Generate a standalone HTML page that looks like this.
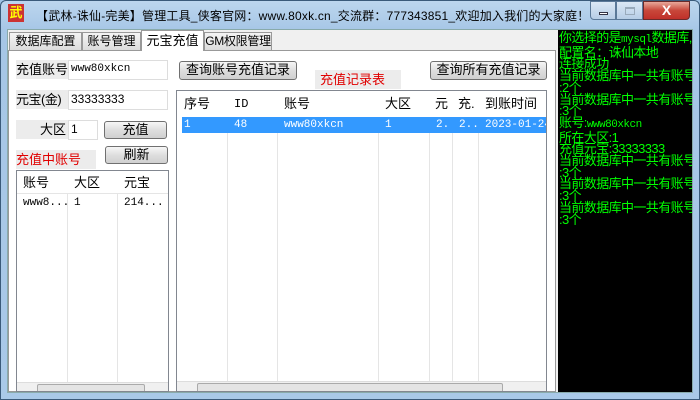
<!DOCTYPE html>
<html><head><meta charset="utf-8"><style>
*{box-sizing:border-box;margin:0;padding:0}
body{width:700px;height:400px;overflow:hidden;position:relative;background:#9fc3e6;font-family:"Liberation Sans","Noto Sans CJK SC","WenQuanYi Zen Hei",sans-serif;font-size:12px;color:#000}
.a{position:absolute}
.frame{left:0;top:0;width:700px;height:400px;background:linear-gradient(#bcd6ee,#a6c6e6 30px,#a9c9e8);border:1px solid #3a5a7a;border-radius:6px 6px 0 0}
.title{left:36px;top:7px;font-size:12px;color:#000;white-space:nowrap;letter-spacing:0.2px}
.client{left:7px;top:29px;width:686px;height:364px;background:#f0f0f0;border:1px solid #8aa}
.tab{top:32px;height:19px;background:linear-gradient(#f4f4f4,#dcdcdc);border:1px solid #999;font-size:12px;text-align:center;line-height:17px;white-space:nowrap;overflow:hidden}
.page{left:8px;top:50px;width:548px;height:342px;background:#fff;border:1px solid #999}
.lbl{background:#ececec;font-size:13px;line-height:19px;white-space:nowrap}
.inp{background:#fff;border:1px solid #ddd;font-family:"Liberation Mono","Noto Sans CJK SC",monospace;font-size:11px;line-height:17px;padding-left:2px}
.btn{background:linear-gradient(#f6f6f6,#dedede 50%,#d0d0d0);border:1px solid #707070;border-radius:3px;font-size:13px;text-align:center;line-height:16px;white-space:nowrap}
.red{color:#e00000;font-size:13px;line-height:19px}
.list{background:#fff;border:1px solid #828790;overflow:hidden}
.hd{position:absolute;top:0;height:100%;border-right:1px solid #e5e5e5}
.sb{background:#f0f0f0;border-top:1px solid #ddd}
.log{left:558px;top:30px;width:134px;height:362px;background:#000;color:#00ff00;font-size:13px;line-height:11.7px;padding:2px 0 0 1px;overflow:hidden;white-space:nowrap;letter-spacing:-0.6px}
.log span{font-family:"Liberation Mono",monospace;font-size:11px;letter-spacing:-0.5px}
</style></head><body>
<div class="a frame"></div>
<div class="a" style="left:8px;top:4px;width:16px;height:18px;background:#c33;color:#ff0;font-size:13px;font-weight:bold;line-height:18px;text-align:center">武</div>
<div class="a title">【武林-诛仙-完美】管理工具_侠客官网：www.80xk.cn_交流群：777343851_欢迎加入我们的大家庭！</div>
<div class="a" style="left:590px;top:1px;width:26px;height:19px;border:1px solid #5a7898;border-radius:0 0 0 4px;background:linear-gradient(#dbe8f5,#b6cde6)"><div class="a" style="left:8px;top:10px;width:9px;height:3px;background:#fff;border:1px solid #334"></div></div>
<div class="a" style="left:616px;top:1px;width:27px;height:19px;border:1px solid #5a7898;background:linear-gradient(#dbe8f5,#b6cde6)"><div class="a" style="left:8px;top:5px;width:10px;height:8px;border:1px solid #9ab;border-top-width:2px"></div></div>
<div class="a" style="left:643px;top:1px;width:47px;height:19px;border:1px solid #6a2a2a;border-radius:0 0 4px 0;background:linear-gradient(#e8a89a,#c8473a 50%,#c0302a);color:#fff;font-weight:bold;text-align:center;font-size:14px;line-height:17px">X</div>
<div class="a client"></div>
<div class="a page"></div>
<div class="a tab" style="left:9px;width:73px">数据库配置</div>
<div class="a tab" style="left:82px;width:59px">账号管理</div>
<div class="a tab" style="left:141px;top:30px;height:21px;width:63px;background:#fff;border-bottom:none;line-height:19px;font-size:13px">元宝充值</div>
<div class="a tab" style="left:204px;width:68px;font-size:12px;letter-spacing:-0.3px">GM权限管理</div>

<div class="a lbl" style="left:16px;top:60px;width:52px">充值账号</div>
<div class="a inp" style="left:68px;top:60px;width:100px;height:20px">www80xkcn</div>
<div class="a lbl" style="left:16px;top:90px;width:52px;letter-spacing:-0.5px">元宝(金)</div>
<div class="a inp" style="left:68px;top:90px;width:100px;height:20px;font-family:'Liberation Sans',sans-serif;font-size:12px">33333333</div>
<div class="a lbl" style="left:16px;top:120px;width:52px;text-align:right;padding-right:2px">大区</div>
<div class="a inp" style="left:68px;top:120px;width:30px;height:20px;font-family:'Liberation Sans',sans-serif;font-size:12px">1</div>
<div class="a btn" style="left:104px;top:121px;width:63px;height:18px">充值</div>
<div class="a lbl red" style="left:16px;top:150px;width:80px">充值中账号</div>
<div class="a btn" style="left:105px;top:146px;width:63px;height:18px">刷新</div>

<div class="a list" style="left:16px;top:170px;width:153px;height:222px">
<div class="hd" style="left:0;width:51px"></div><div class="hd" style="left:51px;width:50px"></div><div class="hd" style="left:101px;width:51px"></div>
<div class="a" style="left:0;top:0;width:153px;height:23px;background:#fff;border-bottom:1px solid #e5e5e5;font-size:13px;line-height:23px"><span class="a" style="left:6px">账号</span><span class="a" style="left:57px">大区</span><span class="a" style="left:107px">元宝</span></div>
<div class="a" style="left:0;top:24px;width:153px;font-family:'Liberation Mono',monospace;font-size:11px;line-height:17px"><span class="a" style="left:6px">www8...</span><span class="a" style="left:57px">1</span><span class="a" style="left:107px">214...</span></div>
<div class="a sb" style="left:0;top:211px;width:153px;height:11px"><div class="a" style="left:20px;top:1px;width:108px;height:9px;background:#e4e4e4;border:1px solid #aaa;border-radius:2px"></div></div>
</div>

<div class="a btn" style="left:179px;top:61px;width:118px;height:19px">查询账号充值记录</div>
<div class="a lbl red" style="left:315px;top:70px;width:86px;padding-left:5px">充值记录表</div>
<div class="a btn" style="left:430px;top:61px;width:117px;height:19px">查询所有充值记录</div>

<div class="a list" style="left:176px;top:90px;width:371px;height:302px">
<div class="hd" style="left:0;width:51px"></div><div class="hd" style="left:51px;width:50px"></div><div class="hd" style="left:101px;width:101px"></div><div class="hd" style="left:202px;width:51px"></div><div class="hd" style="left:253px;width:23px"></div><div class="hd" style="left:276px;width:26px"></div>
<div class="a" style="left:0;top:0;width:371px;height:26px;background:#fff;font-size:13px;line-height:26px"><span class="a" style="left:7px">序号</span><span class="a" style="left:57px;font-family:'Liberation Mono',monospace;font-size:12px">ID</span><span class="a" style="left:107px">账号</span><span class="a" style="left:208px">大区</span><span class="a" style="left:258px">元</span><span class="a" style="left:281px">充.</span><span class="a" style="left:308px">到账时间</span></div>
<div class="a" style="left:5px;top:26px;width:366px;height:16px;background:#3399ff;color:#fff;font-family:'Liberation Mono',monospace;font-size:11px;line-height:16px;white-space:nowrap;overflow:hidden"><span class="a" style="left:2px">1</span><span class="a" style="left:52px">48</span><span class="a" style="left:102px">www80xkcn</span><span class="a" style="left:203px">1</span><span class="a" style="left:254px">2.</span><span class="a" style="left:277px">2..</span><span class="a" style="left:303px">2023-01-24</span></div>
<div class="a sb" style="left:0;top:290px;width:371px;height:12px"><div class="a" style="left:20px;top:1px;width:306px;height:10px;background:#e4e4e4;border:1px solid #aaa;border-radius:2px"></div></div>
</div>

<div class="a log">你选择的是<span>mysql</span>数据库,<br>配置名：诛仙本地<br>连接成功<br>当前数据库中一共有账号<br>:2个<br>当前数据库中一共有账号<br>:3个<br>账号:<span>www80xkcn</span><br>所在大区:1<br>充值元宝:33333333<br>当前数据库中一共有账号<br>:3个<br>当前数据库中一共有账号<br>:3个<br>当前数据库中一共有账号<br>:3个</div>
</body></html>
